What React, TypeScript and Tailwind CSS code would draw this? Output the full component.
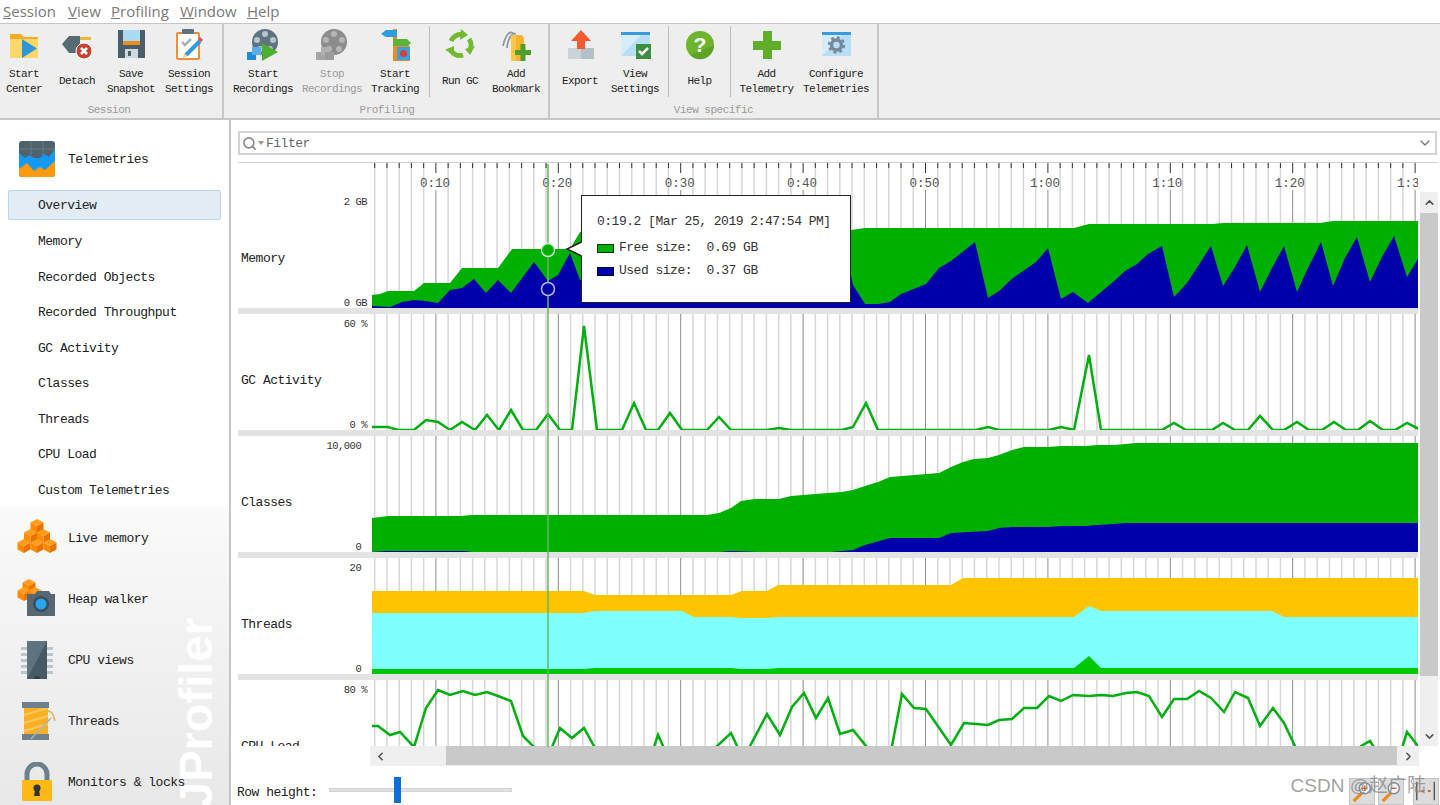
import React from 'react';
import { ChevronDown, ChevronLeft, ChevronRight, ChevronUp, Search } from 'lucide-react';

type Pt = [number, number];

// ---- chart data, in page pixels ----
const memFree: Pt[] = [[371,295],[380,294],[388,291],[414,291],[424,283],[450,283],[462,268],[498,268],[512,249],[570,249],[580,232],[590,228],[851,230],[865,228],[1074,228],[1089,224],[1212,224],[1224,223],[1320,223],[1333,221],[1419,221]];
const memUsed: Pt[] = [[371,306],[390,307],[402,302],[414,300],[426,301],[438,303],[450,290],[462,288],[474,279],[486,293],[498,280],[511,293],[534,262],[548,281],[558,275],[570,253],[580,280],[700,290],[851,275],[853,285],[865,304],[878,304],[890,302],[901,294],[926,284],[939,268],[951,261],[975,242],[988,298],[999,291],[1013,278],[1036,262],[1048,248],[1061,299],[1073,292],[1088,303],[1101,292],[1113,282],[1125,271],[1137,264],[1148,254],[1162,246],[1174,297],[1187,283],[1211,246],[1223,286],[1235,267],[1247,245],[1260,292],[1272,268],[1284,246],[1297,292],[1308,268],[1321,242],[1333,286],[1345,258],[1357,237],[1370,282],[1382,257],[1394,236],[1407,277],[1419,257]];
const gc: Pt[] = [[371,427],[388,427],[398,430],[414,430],[426,420],[438,422],[450,430],[462,422],[475,430],[487,415],[499,430],[511,410],[523,430],[536,430],[548,414],[560,430],[572,430],[584,326],[597,430],[622,430],[634,403],[646,430],[658,430],[670,413],[682,430],[707,430],[719,417],[731,430],[767,430],[779,428],[791,430],[842,430],[853,427],[866,403],[878,430],[976,430],[988,427],[999,430],[1049,430],[1061,427],[1074,430],[1089,355],[1101,430],[1162,430],[1174,423],[1186,430],[1212,430],[1223,423],[1235,430],[1248,430],[1260,416],[1273,430],[1284,430],[1297,422],[1309,430],[1322,430],[1334,422],[1346,430],[1358,430],[1370,421],[1383,430],[1395,430],[1407,423],[1419,429]];
const classesAll: Pt[] = [[371,518],[388,516],[460,516],[472,515],[707,515],[719,513],[731,508],[741,501],[755,499],[779,499],[791,496],[828,493],[842,492],[853,490],[865,486],[878,482],[890,477],[939,473],[951,467],[963,462],[974,459],[988,458],[999,455],[1012,450],[1024,447],[1049,447],[1061,446],[1086,446],[1097,445],[1114,445],[1136,443],[1419,443]];
const classesBlue: Pt[] = [[371,552],[385,551],[465,551],[472,552],[720,552],[730,551],[760,552],[830,552],[842,551],[853,550],[865,545],[890,538],[939,538],[951,533],[988,531],[999,528],[1012,527],[1049,527],[1061,526],[1086,526],[1097,525],[1114,524],[1126,523],[1419,523]];
const thOrange: Pt[] = [[371,591],[584,591],[595,595],[731,595],[742,591],[767,591],[778,585],[951,585],[963,578],[1419,578]];
const thCyan: Pt[] = [[371,613],[584,613],[595,611],[682,611],[694,617],[731,617],[742,618],[767,618],[779,617],[1074,617],[1089,606],[1101,611],[1272,611],[1284,617],[1419,617]];
const thGreen: Pt[] = [[371,669],[584,669],[595,668],[731,668],[742,669],[767,669],[779,668],[1074,668],[1089,656],[1101,668],[1419,668]];
const cpu: Pt[] = [[371,726],[378,726],[390,735],[400,732],[414,747],[426,708],[438,690],[450,695],[463,691],[475,695],[487,692],[498,696],[511,701],[523,736],[534,747],[546,762],[552,747],[560,728],[572,738],[584,728],[595,748],[653,750],[658,735],[664,748],[715,748],[731,733],[738,748],[749,748],[767,714],[780,735],[792,707],[804,693],[816,718],[828,698],[840,734],[853,730],[866,746],[875,770],[886,770],[892,746],[902,694],[914,708],[926,709],[951,745],[964,723],[988,725],[999,720],[1012,719],[1024,708],[1037,708],[1049,696],[1061,701],[1073,695],[1089,696],[1101,695],[1113,696],[1126,693],[1137,692],[1149,696],[1162,717],[1174,699],[1187,699],[1199,691],[1211,698],[1224,712],[1235,692],[1248,698],[1260,726],[1273,708],[1284,723],[1295,746],[1299,755],[1358,755],[1361,746],[1370,741],[1379,755],[1400,755],[1407,732],[1418,746]];

const line = (pts: Pt[]) => pts.map((p) => p.join(',')).join(' ');
const area = (pts: Pt[], base: number) => `${line(pts)} 1419,${base} 371,${base}`;
const seconds = Array.from({ length: 86 }, (_, i) => i + 5);
const tx = (t: number) => 313.5 + 12.24 * t;

function Grid({ top, bottom }: { top: number; bottom: number }) {
  return (
    <>
      {seconds.map((t) => (
        <line key={t} x1={tx(t)} x2={tx(t)} y1={top} y2={bottom} stroke={t % 10 === 0 ? '#8c8c8c' : '#d6d6d6'} strokeWidth={t % 10 === 0 ? 1 : 1.5} />
      ))}
    </>
  );
}

function MemoryChart() {
  return (
    <svg viewBox="372 163 1046 145" className="block w-[1046px] h-[145px]">
      {seconds.map((t) => {
        const major = t % 10 === 0;
        return (
          <g key={t}>
            {!major && <line x1={tx(t)} x2={tx(t)} y1={163} y2={308} stroke="#d6d6d6" strokeWidth={1.5} />}
            {major && <line x1={tx(t)} x2={tx(t)} y1={190} y2={308} stroke="#8c8c8c" />}
            <line x1={tx(t)} x2={tx(t)} y1={163} y2={major ? 173 : 168} stroke="#333" />
          </g>
        );
      })}
      {[10, 20, 30, 40, 50, 60, 70, 80, 90].map((t) => (
        <text key={t} x={tx(t) - (t >= 60 ? 3 : 1)} y={187} textAnchor="middle" fontSize="12.5" fill="#555" className="font-['Liberation_Mono',monospace]">
          {t >= 60 ? `1:${String(t - 60).padStart(2, '0')}` : `0:${t}`}
        </text>
      ))}
      <polygon points={area(memFree, 308)} fill="#00b000" />
      <polygon points={area(memUsed, 308)} fill="#0000aa" />
    </svg>
  );
}

function Row({ name, hi, lo, children }: { name: string; hi: string; lo?: string; children: React.ReactNode }) {
  return (
    <div className="flex items-end">
      <div className="w-[134px] h-[116px] flex shrink-0 text-[13px] tracking-[-0.5px] text-[#222]">
        <div className="flex-1 pl-[3px] pt-[18px] flex items-center whitespace-nowrap">{name}</div>
        <div className="flex flex-col justify-between items-end pt-[3px] pr-[5px] translate-y-[1px] text-[10.5px] leading-[12px] tracking-[-0.5px] whitespace-pre text-[#333]">
          <span>{hi}</span>
          <span>{lo}</span>
        </div>
      </div>
      {children}
    </div>
  );
}

const Sep = () => <div className="h-[6px] w-[1180px] bg-[#e3e3e3]" />;

// ---- toolbar icons ----
const box = 'w-[32px] h-[32px] block';

const StartCenterIcon = () => (
  <svg viewBox="0 0 32 32" className={box}>
    <path d="M2 5h11l3 3h14v21H2z" fill="#f5ad24" />
    <rect x="2" y="10" width="28" height="19" fill="#ffd668" />
    <path d="M14 10l15 9.500-15 9.500z" fill="#2e97dc" />
  </svg>
);
const DetachIcon = () => (
  <svg viewBox="0 0 32 32" className={box}>
    <rect x="18" y="8" width="12" height="3" fill="#f2b632" />
    <path d="M1 15L8 7h11v17H8z" fill="#566a76" />
    <circle cx="23" cy="22" r="8" fill="#c8402e" stroke="#fff" />
    <path d="M20 19l6 6m0-6l-6 6" stroke="#fff" strokeWidth="2.500" />
  </svg>
);
const SaveIcon = () => (
  <svg viewBox="0 0 32 32" className={box}>
    <rect x="3" y="1" width="27" height="28" fill="#4a5d6a" />
    <rect x="8" y="1" width="17" height="11" fill="#a9dcf2" />
    <rect x="8" y="12" width="17" height="4" fill="#f08c1e" />
    <rect x="10" y="20" width="13" height="9" fill="#cfd8dd" />
    <rect x="13" y="22" width="3" height="5" fill="#4a5d6a" />
  </svg>
);
const SettingsIcon = () => (
  <svg viewBox="0 0 32 32" className={box}>
    <rect x="4" y="4" width="22" height="26" rx="1" fill="#fff" stroke="#f08c3c" strokeWidth="2" />
    <rect x="9" y="0" width="12" height="5" rx="1" fill="#607480" />
    <path d="M9 13l3 3 6-6" fill="none" stroke="#a4b4bd" strokeWidth="2.500" />
    <path d="M13 26L27 12" stroke="#2f9be0" strokeWidth="4" />
    <path d="M25 10l2-2 3 3-2 2z" fill="#e8503a" />
    <path d="M10 29l1-5 3 3z" fill="#f6cf8a" />
  </svg>
);
const ReelIcon = ({ gray }: { gray?: boolean }) => {
  const hole = gray ? '#b5b5b5' : '#b7c5cc';
  return (
    <svg viewBox="0 0 32 32" className={box}>
      <circle cx="18" cy="13" r="13" fill={gray ? '#8c8c8c' : '#5f7380'} />
      {[[18, 5], [26, 11], [23, 20], [13, 20], [10, 11]].map(([x, y]) => (
        <circle key={x} cx={x} cy={y} r="3" fill={hole} />
      ))}
      <rect x="0" y="23" width="9" height="8" fill={gray ? '#a5a5a5' : '#1f8ad6'} />
      <rect x="5" y="18" width="9" height="8" fill={gray ? '#b0b0b0' : '#57aee8'} />
      {gray ? (
        <rect x="9" y="23" width="9" height="8" fill="#9c9c9c" />
      ) : (
        <path d="M15 14l16 9-16 9z" fill="#4caf2f" />
      )}
    </svg>
  );
};
const TrackingIcon = () => (
  <svg viewBox="0 0 32 32" className={box}>
    <rect x="14" y="0" width="4" height="18" fill="#f08c1e" />
    <path d="M2 5l5-4h11v7H7z" fill="#2f9be0" />
    <path d="M14 10h14l4 4-4 4H14z" fill="#5cb338" />
    <rect x="14" y="17" width="17" height="15" fill="#f08c1e" />
    <rect x="18" y="18" width="13" height="13" fill="#3aa0e4" />
    <circle cx="24.500" cy="24.500" r="3.500" fill="#d8402c" />
  </svg>
);
const RunGcIcon = () => (
  <svg viewBox="0 0 32 32" className={box}>
    <path d="M7 12a10 10 0 0 1 12-6" fill="none" stroke="#72bb30" strokeWidth="5" />
    <path d="M25 10a10 10 0 0 1 0 12" fill="none" stroke="#72bb30" strokeWidth="5" />
    <path d="M19 26a10 10 0 0 1-13-7" fill="none" stroke="#72bb30" strokeWidth="5" />
    <path d="M17 0l7 6-8 5z" fill="#72bb30" />
    <path d="M31 17l-5 9-5-6z" fill="#72bb30" />
    <path d="M1 21l9-4 0 9z" fill="#72bb30" />
  </svg>
);
const BookmarkIcon = () => (
  <svg viewBox="0 0 32 32" className={box}>
    <path d="M14 5C9 0 5 8 3 17M16 5C12 3 8 9 7 19" fill="none" stroke="#8a9aa5" strokeWidth="1.800" />
    <path d="M11 6h11l2 3v23H11z" fill="#f7b32b" />
    <path d="M11 6h5v26h-5z" fill="#fcc648" />
    <rect x="15" y="21" width="16" height="5" fill="#4f9e2c" />
    <rect x="20.500" y="15" width="5" height="17" fill="#4f9e2c" />
  </svg>
);
const ExportIcon = () => (
  <svg viewBox="0 0 32 32" className={box}>
    <rect x="4" y="19" width="13" height="11" fill="#c9d3d8" />
    <rect x="17" y="19" width="13" height="11" fill="#b3c0c7" />
    <path d="M17 1l10 11h-6v8h-8v-8H7z" fill="#f4592f" />
  </svg>
);
const WindowIcon = ({ children }: { children: React.ReactNode }) => (
  <svg viewBox="0 0 32 32" className={box}>
    <rect x="2" y="3" width="29" height="24" fill="#d5edfb" />
    <path d="M2 27L22 6h9v21z" fill="#b8def5" />
    <rect x="2" y="3" width="29" height="3" fill="#3a9ade" />
    {children}
  </svg>
);
const HelpIcon = () => (
  <svg viewBox="0 0 32 32" className={box}>
    <circle cx="16" cy="16" r="14" fill="#6cb52d" />
    <path d="M6 26A14 14 0 0 0 30 16z" fill="#5ea325" />
    <text x="16" y="23" textAnchor="middle" fontSize="21" fontWeight="700" fill="#fff" className="font-['Liberation_Sans',sans-serif]">?</text>
  </svg>
);
const PlusIcon = () => (
  <svg viewBox="0 0 32 32" className={box}>
    <rect x="12" y="2" width="9" height="28" fill="#5fae2a" />
    <rect x="2" y="12" width="28" height="9" fill="#5fae2a" />
  </svg>
);

type Btn = { lines: string[]; icon: React.ReactNode; w: string; off?: boolean };

const sessionBtns: Btn[] = [
  { lines: ['Start', 'Center'], icon: <StartCenterIcon />, w: 'w-[48px]' },
  { lines: ['Detach'], icon: <DetachIcon />, w: 'w-[58px]' },
  { lines: ['Save', 'Snapshot'], icon: <SaveIcon />, w: 'w-[50px]' },
  { lines: ['Session', 'Settings'], icon: <SettingsIcon />, w: 'w-[66px]' },
];
const profilingA: Btn[] = [
  { lines: ['Start', 'Recordings'], icon: <ReelIcon />, w: 'w-[76px]' },
  { lines: ['Stop', 'Recordings'], icon: <ReelIcon gray />, w: 'w-[62px]', off: true },
  { lines: ['Start', 'Tracking'], icon: <TrackingIcon />, w: 'w-[64px]' },
];
const profilingB: Btn[] = [
  { lines: ['Run GC'], icon: <RunGcIcon />, w: 'w-[60px]' },
  { lines: ['Add', 'Bookmark'], icon: <BookmarkIcon />, w: 'w-[52px]' },
];
const viewA: Btn[] = [
  { lines: ['Export'], icon: <ExportIcon />, w: 'w-[58px]' },
  { lines: ['View', 'Settings'], icon: (
    <WindowIcon>
      <rect x="17" y="15" width="15" height="15" fill="#3d8d3f" />
      <path d="M20 22l3 3 6-6" fill="none" stroke="#fff" strokeWidth="2.500" />
    </WindowIcon>
  ), w: 'w-[52px]' },
];
const viewB: Btn[] = [{ lines: ['Help'], icon: <HelpIcon />, w: 'w-[61px]' }];
const viewC: Btn[] = [
  { lines: ['Add', 'Telemetry'], icon: <PlusIcon />, w: 'w-[71px]' },
  { lines: ['Configure', 'Telemetries'], icon: (
    <WindowIcon>
      <circle cx="16.500" cy="16" r="5" fill="none" stroke="#75899a" strokeWidth="3.500" />
      <circle cx="16.500" cy="16" r="7.500" fill="none" stroke="#75899a" strokeWidth="2.500" strokeDasharray="3 2.900" />
    </WindowIcon>
  ), w: 'w-[68px]' },
];

function ToolButtons({ items }: { items: Btn[] }) {
  return (
    <>
      {items.map((b) => (
        <div key={b.lines.join()} className={`${b.w} flex flex-col items-center shrink-0 pt-[5px]`}>
          {b.icon}
          <div className={`h-[31px] mt-[5px] flex flex-col justify-center items-center text-[11px] leading-[15px] tracking-[-0.6px] whitespace-nowrap ${b.off ? 'text-[#9a9a9a]' : 'text-[#222]'}`}>
            {b.lines.map((l) => <span key={l}>{l}</span>)}
          </div>
        </div>
      ))}
    </>
  );
}

const Divider = () => <div className="w-[1px] h-[71px] mt-[2px] bg-[#bdbdbd] shrink-0" />;

function ToolGroup({ title, width, pad, children }: { title: string; width: string; pad?: string; children: React.ReactNode }) {
  return (
    <div className={`${width} shrink-0 flex flex-col border-r-2 border-[#c8c8c8]`}>
      <div className="flex h-[73px]">{children}</div>
      <div className={`mt-[6px] text-center text-[11px] leading-[14px] tracking-[-0.5px] text-[#9a9a9a] ${pad ?? ''}`}>{title}</div>
    </div>
  );
}

// ---- sidebar icons ----
function Cube({ x, y }: { x: number; y: number }) {
  const w = 6.5;
  const h = 7;
  return (
    <g>
      <path d={`M${x} ${y - h}l${w} ${h / 2}l${-w} ${h / 2}l${-w} ${-h / 2}z`} fill="#ff9d1f" />
      <path d={`M${x - w} ${y - h / 2}l${w} ${h / 2}v${h * 1.0}l${-w} ${-h / 2}z`} fill="#ff8a00" />
      <path d={`M${x + w} ${y - h / 2}l${-w} ${h / 2}v${h * 1.0}l${w} ${-h / 2}z`} fill="#e87400" />
    </g>
  );
}

const side = 'w-[40px] h-[40px] block shrink-0';

const TelemetriesIcon = () => (
  <svg viewBox="0 0 40 40" className={side}>
    <clipPath id="tele"><rect x="2" y="2" width="36" height="36" rx="3" /></clipPath>
    <g clipPath="url(#tele)">
      <rect x="2" y="2" width="36" height="36" fill="#4f626e" />
      <path d="M14 2v14M26 2v14M2 10h36" stroke="#68797f" />
      <path d="M2 14l6 5 5-3 4 3 6 0 4-4 5 3 6-8v30H2z" fill="#149af2" />
      <path d="M2 38V30l8-6 7 8 6-4 5 3 10-9v16z" fill="#ff9a0d" />
    </g>
  </svg>
);
const LiveMemoryIcon = () => (
  <svg viewBox="0 0 40 40" className={side}>
    <Cube x={20} y={8} />
    <Cube x={13.500} y={18} />
    <Cube x={26.500} y={18} />
    <Cube x={7} y={28} />
    <Cube x={20} y={28} />
    <Cube x={33} y={28} />
  </svg>
);
const HeapWalkerIcon = () => (
  <svg viewBox="0 0 40 40" className={side}>
    <Cube x={12} y={7} />
    <Cube x={7} y={15} />
    <Cube x={18} y={15} />
    <path d="M20 12h12l2 3h4v22H10V15h8z" fill="#566874" />
    <circle cx="24" cy="25" r="8" fill="#3d4d57" />
    <circle cx="24" cy="25" r="5.500" fill="#2aa3f0" />
  </svg>
);
const CpuIcon = () => (
  <svg viewBox="0 0 40 40" className={side}>
    {[7, 13, 19, 25, 31].map((y) => (
      <g key={y}>
        <rect x="4" y={y} width="8" height="3" fill="#b8c6ce" />
        <rect x="28" y={y} width="8" height="3" fill="#b8c6ce" />
      </g>
    ))}
    <rect x="10" y="1" width="20" height="38" fill="#465a66" />
    <path d="M10 1h20L10 39z" fill="#5e7380" />
    <path d="M17 39a3 3 0 0 1 6 0z" fill="#2f3e47" />
  </svg>
);
const SpoolIcon = () => (
  <svg viewBox="0 0 40 40" className={side}>
    <rect x="7" y="6" width="24" height="28" fill="#fbb024" />
    <path d="M7 14l24-7M7 22l24-7M7 30l24-7" stroke="#ffc65a" strokeWidth="2" />
    <rect x="5" y="1" width="27" height="6" fill="#6d808c" />
    <rect x="5" y="33" width="27" height="6" fill="#6d808c" />
    <path d="M31 10c6 0 6 8 7 10" fill="none" stroke="#e6b24a" strokeWidth="1.500" />
    <path d="M14 38L34 17" stroke="#a9b4ba" strokeWidth="1.500" />
  </svg>
);
const LockIcon = () => (
  <svg viewBox="0 0 40 40" className={side}>
    <path d="M10 20v-8a10 10 0 0 1 20 0v8" fill="none" stroke="#6d808c" strokeWidth="5" />
    <rect x="5" y="18" width="30" height="21" rx="1" fill="#fdb813" />
    <circle cx="20" cy="26" r="3.500" fill="#333" />
    <path d="M18 28h4l1 6h-6z" fill="#333" />
  </svg>
);

const telemetryItems = ['Memory', 'Recorded Objects', 'Recorded Throughput', 'GC Activity', 'Classes', 'Threads', 'CPU Load', 'Custom Telemetries'];
const sections: { label: string; icon: React.ReactNode }[] = [
  { label: 'Live memory', icon: <LiveMemoryIcon /> },
  { label: 'Heap walker', icon: <HeapWalkerIcon /> },
  { label: 'CPU views', icon: <CpuIcon /> },
  { label: 'Threads', icon: <SpoolIcon /> },
  { label: 'Monitors & locks', icon: <LockIcon /> },
];

function Sidebar() {
  return (
    <aside className="w-[231px] shrink-0 border-r-2 border-[#c4c4c4] flex flex-col text-[13px] tracking-[-0.5px] text-[#222]">
      <div className="flex items-center gap-[11px] pl-[17px] mt-[19px] h-[40px]">
        <TelemetriesIcon />
        <span className="pt-[1px]">Telemetries</span>
      </div>
      <div className="mt-[11px] mx-[8px] h-[30px] flex items-center pl-[29px] pt-[2px] bg-[#e3ecf5] border border-[#b9d4ec] rounded-[2px]">Overview</div>
      <div className="mt-[3px] flex flex-col">
        {telemetryItems.map((t) => (
          <div key={t} className="h-[35.500px] pl-[38px] pt-[2px] flex items-center">{t}</div>
        ))}
      </div>
      <div className="relative flex-1 overflow-hidden bg-linear-to-b from-[#fafafa] to-[#e8e8e8]">
        <div className="absolute left-[174px] bottom-[-3px] origin-bottom-left font-['Liberation_Sans',sans-serif] font-bold text-[47px] leading-[44px] tracking-normal text-white whitespace-nowrap -rotate-90 translate-x-[44px]">
          JProfiler
        </div>
        {sections.map((s) => (
          <div key={s.label} className="relative h-[61px] pl-[17px] flex items-center gap-[11px] whitespace-nowrap">
            {s.icon}
            <span className="pt-[2px]">{s.label}</span>
          </div>
        ))}
      </div>
    </aside>
  );
}

function Overlay() {
  return (
    <>
      <div className="absolute left-[343px] top-[32px] w-[270px] h-[108px] bg-white border-[1.5px] border-[#222] pl-[15px] pt-[18px] text-[13px] tracking-[-0.5px] text-[#333] whitespace-pre">
        <div className="leading-[16px]">0:19.2 [Mar 25, 2019 2:47:54 PM]</div>
        <div className="mt-[10px] flex items-center gap-[5px] leading-[16px]">
          <span className="w-[17px] h-[9px] bg-[#00b000] border border-[#0a3a0a]" />
          <span>Free size:  0.69 GB</span>
        </div>
        <div className="mt-[7px] flex items-center gap-[5px] leading-[16px]">
          <span className="w-[17px] h-[9px] bg-[#0000aa] border border-[#000050]" />
          <span>Used size:  0.37 GB</span>
        </div>
      </div>
      <svg viewBox="238 162 1200 584" className="absolute left-0 top-0 w-[1200px] h-[584px] pointer-events-none">
        <line x1="548" x2="548" y1="163" y2="746" stroke="#62b862" strokeWidth="1.500" />
        <circle cx="548" cy="249" r="6.500" fill="#00b000" stroke="#cdeccd" strokeWidth="1.500" />
        <circle cx="548" cy="288" r="6.500" fill="#0000aa" stroke="#b8b8ea" strokeWidth="1.500" />
        <path d="M582 241L567 248L582 255z" fill="#fff" />
        <path d="M581.500 241L567 248L581.500 255" fill="none" stroke="#222" strokeWidth="1.500" />
      </svg>
    </>
  );
}

function Charts() {
  return (
    <div className="relative flex w-[1200px] ml-[7px] mt-[7px] border-t border-[#cfcfcf]">
      <div className="w-[1180px] shrink-0">
        <Row name="Memory" hi="2 GB" lo="0 GB"><MemoryChart /></Row>
        <Sep />
        <Row name="GC Activity" hi="60 %" lo="0 %">
          <svg viewBox="372 314 1046 116" className="block w-[1046px] h-[116px]">
            <Grid top={314} bottom={430} />
            <polyline points={line(gc)} fill="none" stroke="#00b010" strokeWidth="2.500" />
          </svg>
        </Row>
        <Sep />
        <Row name="Classes" hi="10,000 " lo="0 ">
          <svg viewBox="372 436 1046 116" className="block w-[1046px] h-[116px]">
            <Grid top={436} bottom={552} />
            <polygon points={area(classesAll, 552)} fill="#00b000" />
            <polygon points={area(classesBlue, 552)} fill="#0000aa" />
          </svg>
        </Row>
        <Sep />
        <Row name="Threads" hi="20 " lo="0 ">
          <svg viewBox="372 558 1046 116" className="block w-[1046px] h-[116px]">
            <Grid top={558} bottom={674} />
            <polygon points={area(thOrange, 674)} fill="#ffc400" />
            <polygon points={area(thCyan, 674)} fill="#80ffff" />
            <polygon points={area(thGreen, 674)} fill="#00c800" />
          </svg>
        </Row>
        <Sep />
        <div className="h-[66px] overflow-hidden">
          <Row name="CPU Load" hi="80 %">
            <svg viewBox="372 680 1046 116" className="block w-[1046px] h-[116px]">
              <Grid top={680} bottom={796} />
              <polyline points={line(cpu)} fill="none" stroke="#00b010" strokeWidth="2.500" />
            </svg>
          </Row>
        </div>
      </div>
      {/* vertical scrollbar */}
      <div className="w-[18px] ml-[2px] mt-[29px] flex flex-col bg-[#efefef]">
        <div className="h-[21px] flex items-center justify-center"><ChevronUp size={13} strokeWidth={3} color="#555" /></div>
        <div className="h-[463px] bg-[#c9c9c9]" />
        <div className="flex-1 flex items-end justify-center pb-[3px]"><ChevronDown size={13} strokeWidth={3} color="#555" /></div>
      </div>
      <Overlay />
    </div>
  );
}

function MiniTool({ kind }: { kind: 'in' | 'out' | 'fit' }) {
  return (
    <div className="w-[26px] h-[27px] bg-[#dcdcdc] border border-[#c4c4c4] shrink-0">
      <svg viewBox="0 0 26 27" className="block w-full h-full">
        {kind === 'fit' ? (
          <>
            <path d="M3 3v20M22 3v20" stroke="#555" strokeWidth="1.500" />
            <path d="M8 13h3M15 13h3" stroke="#e2572b" strokeWidth="2" />
          </>
        ) : (
          <>
            <path d="M4 24l9-9" stroke="#ee8a1d" strokeWidth="3.500" />
            <circle cx="16" cy="10" r="6" fill="#eef4f7" stroke="#7d8c95" strokeWidth="1.500" />
            <path d="M13 10h6" stroke="#e2572b" strokeWidth="1.500" />
            {kind === 'in' && <path d="M16 7v6" stroke="#e2572b" strokeWidth="1.500" />}
          </>
        )}
      </svg>
    </div>
  );
}

export default function App() {
  return (
    <div className="relative w-[1440px] h-[805px] overflow-hidden bg-white flex flex-col font-['Liberation_Mono',monospace]">
      <div className="h-[23px] shrink-0 flex items-center pl-[3px] font-['Open_Sans',sans-serif] text-[15px] text-[#7a7a7a]">
        <span className="w-[65px]"><span className="underline">S</span>ession</span>
        <span className="w-[43px]"><span className="underline">V</span>iew</span>
        <span className="w-[69px]"><span className="underline">P</span>rofiling</span>
        <span className="w-[67px]"><span className="underline">W</span>indow</span>
        <span><span className="underline">H</span>elp</span>
      </div>

      <div className="h-[97px] shrink-0 flex bg-[#eeeeee] border-t border-b-2 border-[#c6c6c6]">
        <ToolGroup title="Session" width="w-[224px]" pad="pr-[4px]">
          <ToolButtons items={sessionBtns} />
        </ToolGroup>
        <ToolGroup title="Profiling" width="w-[326px]" pad="pl-[2px]">
          <div className="w-[1px] shrink-0" />
          <ToolButtons items={profilingA} />
          <div className="w-[2px] shrink-0" />
          <Divider />
          <ToolButtons items={profilingB} />
        </ToolGroup>
        <ToolGroup title="View specific" width="w-[329px]">
          <div className="w-[1px] shrink-0" />
          <ToolButtons items={viewA} />
          <div className="w-[7px] shrink-0" />
          <Divider />
          <ToolButtons items={viewB} />
          <Divider />
          <ToolButtons items={viewC} />
        </ToolGroup>
      </div>

      <div className="flex flex-1 min-h-0">
        <Sidebar />
        <main className="flex-1 flex flex-col min-w-0 text-[#222]">
          <div className="ml-[7px] mt-[11px] w-[1199px] h-[24px] shrink-0 border-2 border-[#d4d4d4] flex items-center pl-[2px] pr-[2px] text-[13px] tracking-[-0.5px] text-[#666]">
            <Search size={15} strokeWidth={2.5} color="#8a8a8a" />
            <span className="ml-[1px] mr-[2px] w-0 h-0 border-x-[3px] border-x-transparent border-t-[4px] border-t-[#9a9a9a]" />
            <span className="pt-[1px]">Filter</span>
            <ChevronDown size={16} color="#777" className="ml-auto" />
          </div>
          <Charts />
          {/* horizontal scrollbar */}
          <div className="ml-[139px] w-[1049px] h-[20px] shrink-0 flex bg-[#efefef]">
            <div className="w-[76px] flex items-center pl-[4px]"><ChevronLeft size={13} strokeWidth={3} color="#555" /></div>
            <div className="w-[951px] bg-[#c9c9c9] mb-[1px]" />
            <div className="flex-1 flex items-center justify-center"><ChevronRight size={13} strokeWidth={3} color="#555" /></div>
          </div>
          <div className="flex-1 flex items-end pl-[6px] pr-[1px] text-[13px] tracking-[-0.5px]">
            <span className="mb-[3px] whitespace-nowrap">Row height:</span>
            <div className="relative ml-[12px] mb-[13px] w-[183px] h-[4px] bg-[#e0e0e0] border border-[#d4d4d4]">
              <div className="absolute left-[64px] top-[-12px] w-[7px] h-[26px] bg-[#0a6fd6]" />
            </div>
            <div className="ml-auto flex">
              <MiniTool kind="in" />
              <div className="w-[3px]" />
              <MiniTool kind="out" />
              <div className="w-[9px]" />
              <MiniTool kind="fit" />
            </div>
          </div>
        </main>
      </div>

      <div className="absolute right-[14px] top-[774px] font-['Liberation_Sans','Noto_Sans_CJK_SC',sans-serif] text-[19px] leading-[24px] text-[#8a8a8a]/80 whitespace-nowrap">
        CSDN @赵广陆
      </div>
    </div>
  );
}
